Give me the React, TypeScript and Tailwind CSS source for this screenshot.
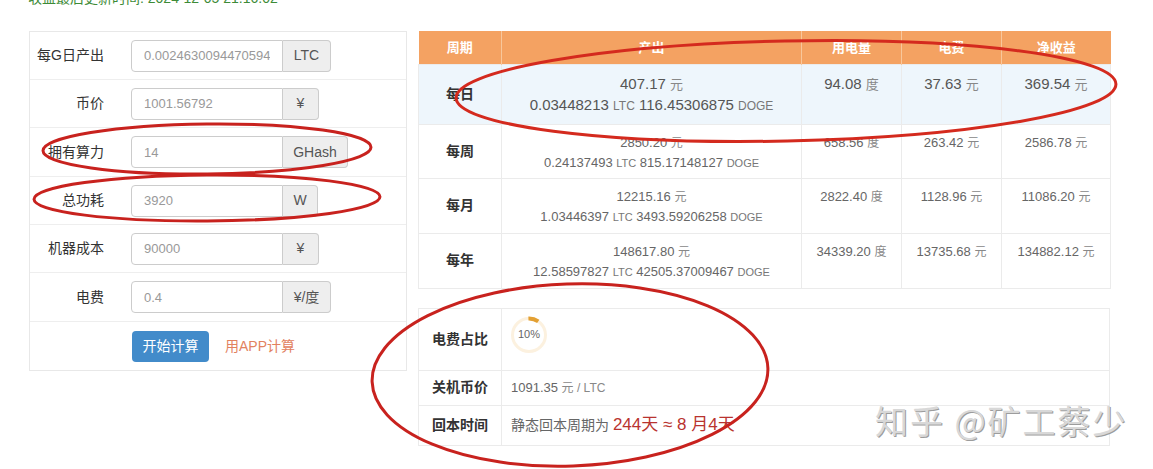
import React from "react";

const inputs = [
  { label: "每G日产出", value: "0.0024630094470594", unit: "LTC", unitW: "w-[48px]", h: "h-[48px]" },
  { label: "币价", value: "1001.56792", unit: "¥", unitW: "w-[36px]", h: "h-[48px]" },
  { label: "拥有算力", value: "14", unit: "GHash", unitW: "w-[65px]", h: "h-[49px]" },
  { label: "总功耗", value: "3920", unit: "W", unitW: "w-[35px]", h: "h-[48px]" },
  { label: "机器成本", value: "90000", unit: "¥", unitW: "w-[36px]", h: "h-[48px]" },
  { label: "电费", value: "0.4", unit: "¥/度", unitW: "w-[48px]", h: "h-[49px]" },
];

const rows = [
  { period: "每日", cny: "407.17", ltc: "0.03448213", doge: "116.45306875", kwh: "94.08", fee: "37.63", net: "369.54", h: "h-[60px] bg-[#eef6fc]" },
  { period: "每周", cny: "2850.20", ltc: "0.24137493", doge: "815.17148127", kwh: "658.56", fee: "263.42", net: "2586.78", h: "h-[54px]" },
  { period: "每月", cny: "12215.16", ltc: "1.03446397", doge: "3493.59206258", kwh: "2822.40", fee: "1128.96", net: "11086.20", h: "h-[55px]" },
  { period: "每年", cny: "148617.80", ltc: "12.58597827", doge: "42505.37009467", kwh: "34339.20", fee: "13735.68", net: "134882.12", h: "h-[55px]" },
];

function Ring({ pct }: { pct: number }) {
  const r = 16.5;
  const c = 2 * Math.PI * r;
  return (
    <div className="relative w-[38px] h-[38px]">
      <svg width="38" height="38" viewBox="0 0 38 38">
        <circle cx="19" cy="19" r={r} fill="none" stroke="#fcf1df" strokeWidth="3" />
        <circle
          cx="19"
          cy="19"
          r={r}
          fill="none"
          stroke="#e3a033"
          strokeWidth="4"
          strokeDasharray={`${c * pct} ${c}`}
          transform="rotate(-92 19 19)"
        />
      </svg>
      <span className="absolute inset-0 flex items-center justify-center text-[11px] text-[#666]">
        {Math.round(pct * 100)}%
      </span>
    </div>
  );
}

export default function App() {
  return (
    <div className="relative w-[1153px] h-[469px] overflow-hidden bg-white font-['Liberation_Sans','Noto_Sans_CJK_SC',sans-serif]">
      <div className="h-5 -mt-[12px] pl-[28px] text-[14px] leading-5 text-[#3d8b37]">
        收益最后更新时间: 2024-12-05 21:16:02
      </div>

      <div className="flex items-start gap-[11px] pl-[29px] mt-[23px]">
        {/* calculator form */}
        <div className="w-[378px] border border-[#e8e8e8]">
          {inputs.map((f) => (
            <div key={f.label} className={`flex items-center ${f.h} border-b border-[#eee]`}>
              <div className="w-[74px] text-right text-[14px] text-[#333]">{f.label}</div>
              <div className="flex h-[32px] ml-[27px]">
                <input
                  readOnly
                  placeholder={f.value}
                  className="w-[152px] h-full border border-[#ccc] rounded-l-[4px] px-3 text-[13px] placeholder:text-[#999] outline-none"
                />
                <div
                  className={`${f.unitW} h-full flex items-center justify-center border border-l-0 border-[#ccc] bg-[#eee] rounded-r-[4px] text-[14px] text-[#555]`}
                >
                  {f.unit}
                </div>
              </div>
            </div>
          ))}
          <div className="flex items-center h-[48px] pl-[102px]">
            <button className="w-[77px] h-[31px] rounded-[4px] bg-[#428bca] text-white text-[14px]">
              开始计算
            </button>
            <span className="ml-4 text-[14px] text-[#e2825f]">用APP计算</span>
          </div>
        </div>

        <div className="flex flex-col gap-[19px] w-[692px]">
          {/* earnings table */}
          <table className="w-[692px] table-fixed border-collapse">
            <colgroup>
              <col className="w-[83px]" />
              <col className="w-[300px]" />
              <col className="w-[100px]" />
              <col className="w-[100px]" />
              <col className="w-[109px]" />
            </colgroup>
            <thead>
              <tr className="h-[33px] bg-[#f4a262] text-white text-[13px] font-bold">
                <th className="border-r border-[#f8c79b]">周期</th>
                <th className="border-r border-[#f8c79b]">产出</th>
                <th className="border-r border-[#f8c79b]">用电量</th>
                <th className="border-r border-[#f8c79b]">电费</th>
                <th>净收益</th>
              </tr>
            </thead>
            <tbody>
              {rows.map((r, i) => {
                const first = i === 0;
                const num = first ? "text-[15px] text-[#555]" : "text-[13px] text-[#666]";
                const unit = first ? "text-[13px] text-[#888]" : "text-[12px] text-[#888]";
                const small = first ? "text-[12px] text-[#777]" : "text-[11px] text-[#777]";
                const pad = first ? "pt-[9px] leading-5" : "pt-[8px] leading-[19px]";
                return (
                  <tr key={r.period} className={r.h}>
                    <td className="border border-[#ebebeb] text-center align-middle text-[14px] font-bold text-[#333]">
                      {r.period}
                    </td>
                    <td className={`border border-[#ebebeb] text-center align-top ${pad}`}>
                      <div className={num}>
                        {r.cny} <span className={unit}>元</span>
                      </div>
                      <div className={num}>
                        {r.ltc} <span className={small}>LTC</span> {r.doge} <span className={small}>DOGE</span>
                      </div>
                    </td>
                    <td className={`border border-[#ebebeb] text-center align-top ${pad} ${num}`}>
                      {r.kwh} <span className={unit}>度</span>
                    </td>
                    <td className={`border border-[#ebebeb] text-center align-top ${pad} ${num}`}>
                      {r.fee} <span className={unit}>元</span>
                    </td>
                    <td className={`border border-[#ebebeb] text-center align-top ${pad} ${num}`}>
                      {r.net} <span className={unit}>元</span>
                    </td>
                  </tr>
                );
              })}
            </tbody>
          </table>

          {/* summary table */}
          <table className="w-[692px] table-fixed border-collapse">
            <colgroup>
              <col className="w-[83px]" />
              <col />
            </colgroup>
            <tbody className="text-[14px]">
              <tr className="h-[62px]">
                <td className="border border-[#ebebeb] text-center font-bold text-[#333]">电费占比</td>
                <td className="border border-[#ebebeb] align-top pt-[7px] pl-[8px]">
                  <Ring pct={0.1} />
                </td>
              </tr>
              <tr className="h-[35px]">
                <td className="border border-[#ebebeb] text-center font-bold text-[#333]">关机币价</td>
                <td className="border border-[#ebebeb] pl-[9px] text-[13px] text-[#666]">
                  1091.35 <span className="text-[12px] text-[#888]">元 / LTC</span>
                </td>
              </tr>
              <tr className="h-[40px]">
                <td className="border border-[#ebebeb] text-center font-bold text-[#333]">回本时间</td>
                <td className="border border-[#ebebeb] pl-[9px] text-[#666]">
                  静态回本周期为 <span className="text-[17px] text-[#b9332f]">244天 ≈ 8 月4天</span>
                </td>
              </tr>
            </tbody>
          </table>
        </div>
      </div>

      {/* hand-drawn annotation marks */}
      <svg className="absolute inset-0 pointer-events-none" width="1153" height="469" viewBox="0 0 1153 469">
        <g fill="none" stroke="#c8221e" strokeWidth="3">
          <ellipse cx="207" cy="149" rx="164" ry="25" transform="rotate(-0.6 207 149)" />
          <ellipse cx="207" cy="198" rx="173" ry="23" transform="rotate(-0.4 207 198)" />
          <ellipse cx="786" cy="91" rx="330" ry="50" transform="rotate(-1.2 786 91)" stroke="#d42a1e" />
          <ellipse cx="570" cy="375" rx="198" ry="91" transform="rotate(-2 570 375)" />
        </g>
      </svg>

      {/* watermark */}
      <div className="absolute left-[875px] top-[404px] text-[33px] leading-none tracking-[2px] text-[#d8d8d8] [text-shadow:1px_1px_0_#9c9c9c] font-['Noto_Sans_CJK_SC',sans-serif] whitespace-nowrap">
        知乎 @矿工蔡少
      </div>
    </div>
  );
}
